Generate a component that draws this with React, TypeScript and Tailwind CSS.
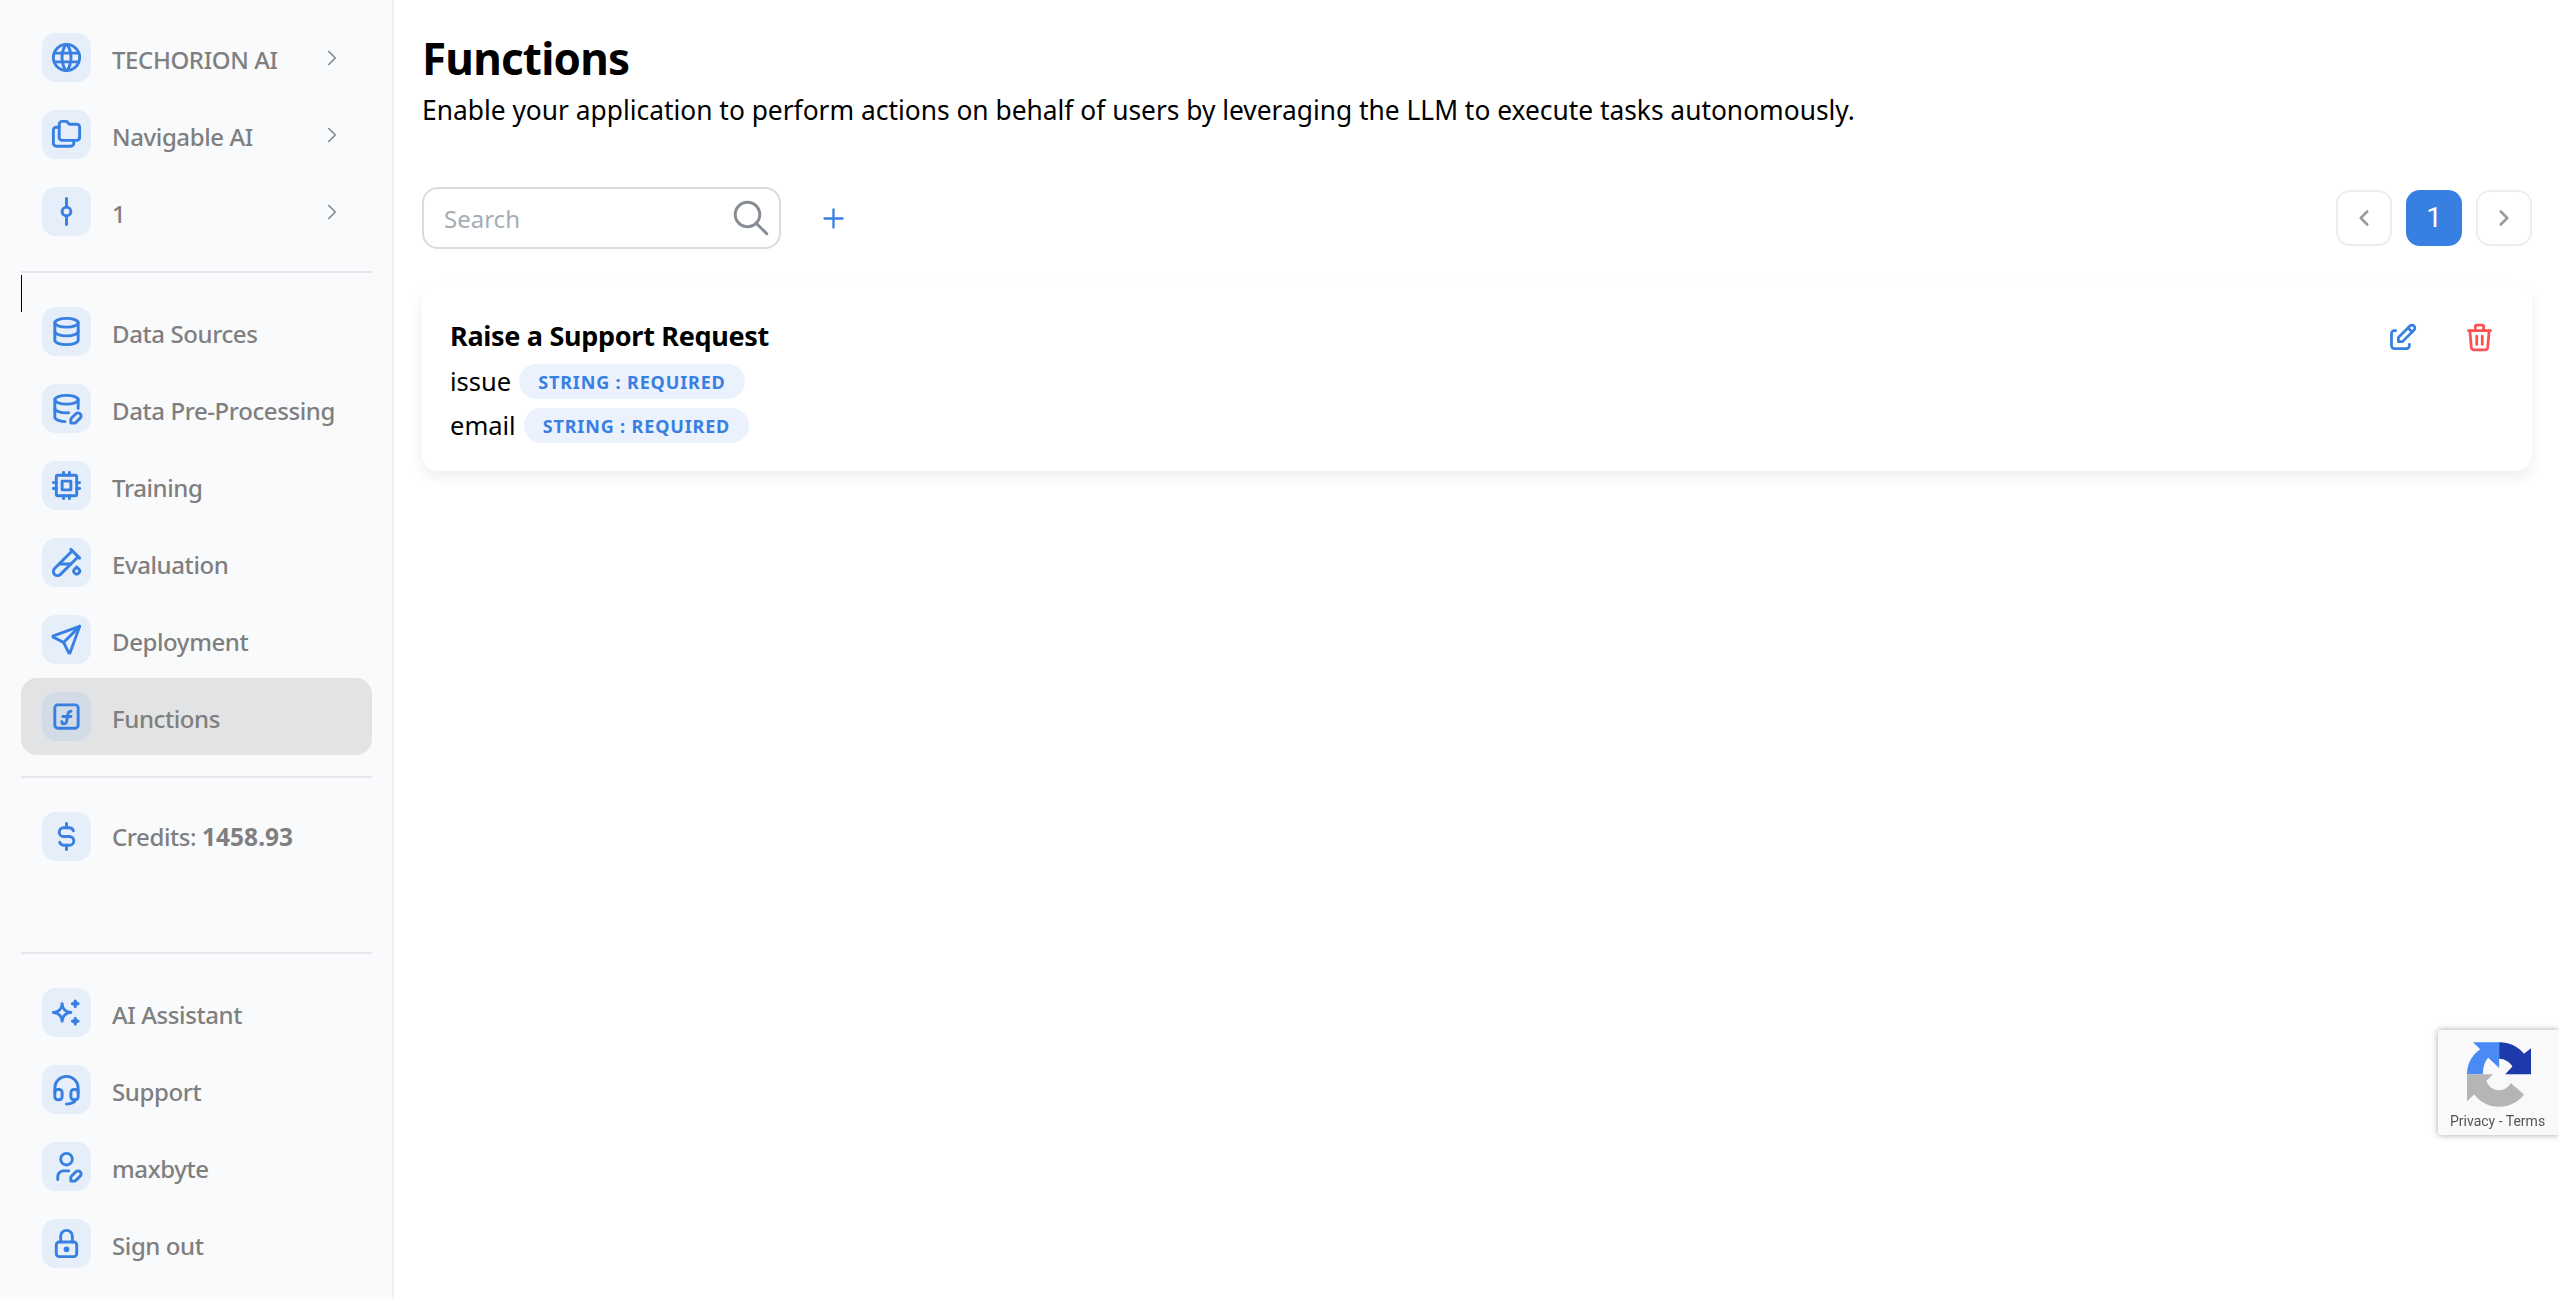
import React from "react";
import {
  TbWorld, TbFolders, TbGitCommit, TbChevronRight, TbChevronLeft, TbDatabase, TbDatabaseEdit, TbCpu, TbTestPipe,
  TbSend, TbCurrencyDollar, TbSparkles, TbHeadset, TbUserEdit, TbLock, TbSearch, TbPlus, TbEdit, TbTrash,
} from "react-icons/tb";

type IconT = React.ComponentType<{ size?: number; className?: string; strokeWidth?: number }>;

function FnIcon({ size = 35 }: { size?: number }) {
  return (
    <svg width={size} height={size} viewBox="0 0 24 24" fill="none" stroke="currentColor" strokeWidth="2" strokeLinecap="round" strokeLinejoin="round">
      <rect x="4" y="4" width="16" height="16" rx="2" />
      <path d="M8.8 15.6c0 1 .7 1.4 1.5 1.4 1 0 1.6-.7 1.8-1.6l1-5.4c.2-1 .8-1.6 2-1.6" />
      <path d="M9.5 12h5.5" />
    </svg>
  );
}

function Row({ icon: Icon, label, chevron, active, children }: { icon: IconT; label?: string; chevron?: boolean; active?: boolean; children?: React.ReactNode }) {
  return (
    <div className={`flex h-[77px] items-center pl-[21px] pr-[27px] rounded-[16px] ${active ? "bg-[#e2e3e5]" : ""}`}>
      <div className={`flex h-[49px] w-[49px] shrink-0 items-center justify-center rounded-[14px] text-[#3780e2] ${active ? "bg-[#d3dbe7]" : "bg-[#e6eefa]"}`}>
        <Icon size={35} />
      </div>
      <span className={`ml-[21px] text-[24px] font-medium leading-none tracking-[-0.4px] text-[#7f7f7f] ${children ? "pt-[2px]" : "pt-[4px]"}`}>{label}{children}</span>
      {chevron && <TbChevronRight size={26} strokeWidth={1.5} className="ml-auto text-[#7f8790]" />}
    </div>
  );
}

function Badge() {
  return (
    <span className="inline-flex h-[35px] items-center rounded-full bg-[#ebf2fd] px-[19px] pt-[1px] text-[18px] font-bold tracking-[0.85px] text-[#3780e2]">
      STRING : REQUIRED
    </span>
  );
}

function Recaptcha() {
  return (
    <div className="fixed left-[2438px] top-[1030px] flex h-[105px] w-[121px] flex-col items-start rounded-l-[3px] bg-[#f9f9f9] shadow-[0_0_6px_rgba(0,0,0,0.35)]">
      <svg width="64" height="65" viewBox="200 125 193 195" className="ml-[29px] mt-[12px]">
        <path d="M218 125 H297 V203 L264 172 C255 180 248 200 248 222 H200 C200 190 215 163 240 146 Z" fill="#4a8af4" />
        <path d="M297 125 C328 125 355 138 372 160 L393 143 V222 H315 L337 198 C328 185 313 175 297 175 Z" fill="#1c3aa9" />
        <path d="M200 222 H278 L258 242 C266 258 278 270 296 270 C311 270 324 262 332 248 L372 283 C354 306 327 320 296 320 C266 320 240 306 222 283 L200 303 Z" fill="#b5b5b5" />
      </svg>
      <div className="ml-[12px] mt-[7px] whitespace-nowrap font-['Roboto',sans-serif] text-[14px] leading-none text-[#555]">Privacy - Terms</div>
    </div>
  );
}

export default function App() {
  return (
    <div className="flex h-[1299px] w-full overflow-hidden bg-white font-['Noto_Sans',sans-serif]">
      <aside className="flex w-[394px] shrink-0 flex-col border-r-2 border-[#eef0f3] bg-[#f9fafc] pl-[21px] pr-[20px] pt-[19px]">
        <Row icon={TbWorld} label="TECHORION AI" chevron />
        <Row icon={TbFolders} label="Navigable AI" chevron />
        <Row icon={TbGitCommit} label="1" chevron />
        <div className="relative mt-[21px] h-[22px] border-t-2 border-[#e5e7eb]">
          <div className="absolute left-0 top-[2px] h-[37px] w-px bg-black" />
        </div>
        <Row icon={TbDatabase} label="Data Sources" />
        <Row icon={TbDatabaseEdit} label="Data Pre-Processing" />
        <Row icon={TbCpu} label="Training" />
        <Row icon={TbTestPipe} label="Evaluation" />
        <Row icon={TbSend} label="Deployment" />
        <Row icon={FnIcon as IconT} label="Functions" active />
        <div className="mt-[21px] h-[22px] border-t-2 border-[#e5e7eb]" />
        <Row icon={TbCurrencyDollar}>Credits: <b className="text-[24.5px] font-bold tracking-[0px]">1458.93</b></Row>
        <div className="mt-[77px] h-[22px] border-t-2 border-[#e5e7eb]" />
        <Row icon={TbSparkles} label="AI Assistant" />
        <Row icon={TbHeadset} label="Support" />
        <Row icon={TbUserEdit} label="maxbyte" />
        <Row icon={TbLock} label="Sign out" />
      </aside>
      <main className="min-w-0 flex-1 pl-[28px] pr-[27px] pt-[26px]">
        <h1 className="h-[64px] text-[44px] font-bold leading-[64px] tracking-[-0.8px] text-black">Functions</h1>
        <p className="mt-[2px] h-[36px] whitespace-nowrap text-[26.35px] leading-[36px] text-black">
          Enable your application to perform actions on behalf of users by leveraging the LLM to execute tasks autonomously.
        </p>
        <div className="mt-[59px] flex h-[62px] items-center">
          <div className="flex h-[62px] w-[359px] items-center rounded-[16px] border-2 border-[#d8dbdf] pl-[20px] pr-[7px]">
            <span className="flex-1 pt-[2px] text-[24px] text-[#a6adb5]">Search</span>
            <TbSearch size={42} strokeWidth={1.7} className="text-[#858c93]" />
          </div>
          <TbPlus size={31} className="ml-[37px] text-[#3780e2]" strokeWidth={1.8} />
          <div className="ml-auto flex items-center gap-[14px]">
            <div className="flex h-[56px] w-[56px] items-center justify-center rounded-[14px] border-2 border-[#eeeeee] text-[#9c9c9c]">
              <TbChevronLeft size={26} strokeWidth={2.4} />
            </div>
            <div className="flex h-[56px] w-[56px] items-center justify-center rounded-[14px] bg-[#3780e2] font-['Roboto',sans-serif] text-[28px] font-normal text-white">1</div>
            <div className="flex h-[56px] w-[56px] items-center justify-center rounded-[14px] border-2 border-[#eeeeee] text-[#9c9c9c]">
              <TbChevronRight size={26} strokeWidth={2.4} />
            </div>
          </div>
        </div>
        <div className="mt-[35px] flex h-[187px] items-start rounded-[16px] bg-white px-[28px] pt-[28px] shadow-[0_6px_14px_rgba(0,0,0,0.07)]">
          <div className="flex-1">
            <div className="h-[48px] text-[27px] font-bold leading-[48px] tracking-[-0.3px] text-black">Raise a Support Request</div>
            <div className="mt-[4px] flex h-[35px] items-center gap-[8px] text-[25.5px] text-black"><span>issue</span><Badge /></div>
            <div className="mt-[9px] flex h-[35px] items-center gap-[8px] text-[25.5px] text-black"><span>email</span><Badge /></div>
          </div>
          <div className="flex items-center gap-[44px] pr-[8px] pt-[9px]">
            <TbEdit size={33} className="text-[#3780e2]" />
            <TbTrash size={33} className="text-[#fa5252]" />
          </div>
        </div>
      </main>
      <Recaptcha />
    </div>
  );
}
